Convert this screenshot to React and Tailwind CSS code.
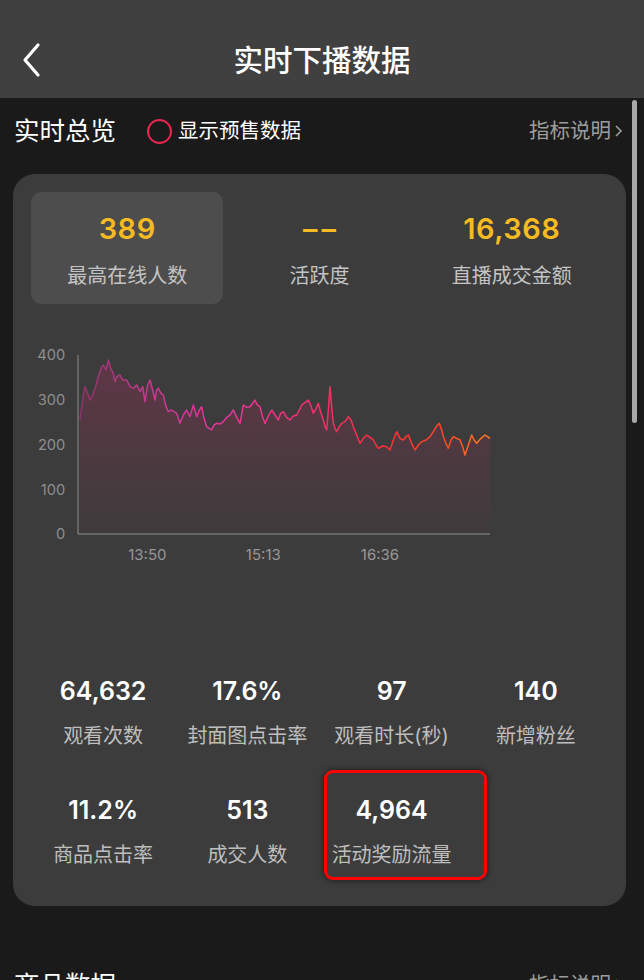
import React from "react";

const font = { fontFamily: 'Inter, "Noto Sans CJK SC", sans-serif' };

// chart points, in the 3x coordinate space of the chart svg
const points = [
  [180, 270], [188, 210], [195, 170], [203, 190], [210, 210], [220, 190], [228, 165],
  [235, 140], [243, 115], [250, 105], [258, 120], [265, 90], [272, 115], [280, 130],
  [285, 155], [290, 140], [300, 135], [308, 150], [320, 150], [330, 170], [340, 175],
  [350, 165], [360, 185], [368, 170], [375, 215], [383, 165], [390, 150], [398, 180],
  [405, 210], [410, 180], [415, 175], [423, 190], [430, 195], [438, 230], [445, 245],
  [455, 240], [470, 250], [480, 280], [490, 255], [500, 240], [510, 260], [520, 225],
  [530, 260], [538, 240], [545, 230], [552, 265], [560, 290], [568, 295], [575, 300],
  [582, 285], [590, 280], [600, 282], [610, 275], [620, 262], [630, 255], [640, 240],
  [650, 262], [660, 280], [670, 225], [680, 232], [690, 230], [698, 220], [705, 210],
  [712, 225], [720, 230], [728, 262], [735, 280], [745, 258], [755, 240], [765, 255],
  [775, 270], [782, 250], [790, 245], [800, 262], [810, 270], [820, 258], [830, 255],
  [838, 240], [845, 225], [855, 218], [865, 210], [872, 225], [880, 250], [888, 235],
  [895, 220], [903, 250], [910, 270], [915, 290], [920, 300], [925, 240], [930, 170],
  [935, 230], [940, 280], [945, 295], [950, 305], [958, 290], [965, 280], [975, 275],
  [985, 260], [993, 270], [1000, 290], [1010, 315], [1020, 340], [1030, 325],
  [1040, 315], [1050, 322], [1060, 330], [1068, 345], [1075, 355], [1088, 348],
  [1100, 350], [1110, 360], [1120, 330], [1130, 305], [1140, 325], [1150, 330],
  [1158, 320], [1165, 315], [1175, 340], [1185, 360], [1195, 345], [1205, 335],
  [1218, 330], [1230, 320], [1240, 305], [1250, 288], [1258, 280], [1265, 300],
  [1270, 320], [1278, 340], [1285, 355], [1293, 330], [1300, 320], [1310, 325],
  [1320, 330], [1328, 350], [1335, 375], [1345, 345], [1355, 315], [1362, 330],
  [1370, 340], [1383, 325], [1395, 315], [1410, 325],
];

const linePath = points.map(([x, y], i) => `${i ? "L" : "M"}${x} ${y}`).join(" ");
const areaPath = `${linePath} L1410 612 L180 612 Z`;

const Chart = () => (
  <svg width="470" height="240" viewBox="33 0 1410 720" className="block">
    <defs>
      <linearGradient id="line" x1="180" y1="0" x2="1410" y2="0" gradientUnits="userSpaceOnUse">
        <stop offset="0" stopColor="#8a3468" />
        <stop offset="0.15" stopColor="#c23a8e" />
        <stop offset="0.35" stopColor="#e6369c" />
        <stop offset="0.6" stopColor="#f52f66" />
        <stop offset="0.75" stopColor="#ff2f35" />
        <stop offset="0.9" stopColor="#ff4a22" />
        <stop offset="1" stopColor="#ff7d25" />
      </linearGradient>
      <linearGradient id="area" x1="0" y1="0" x2="0" y2="1">
        <stop offset="0" stopColor="#b8285e" stopOpacity="0.28" />
        <stop offset="1" stopColor="#b8285e" stopOpacity="0.02" />
      </linearGradient>
    </defs>
    <path d={areaPath} fill="url(#area)" />
    <path d={linePath} fill="none" stroke="url(#line)" strokeWidth="4.5" strokeLinejoin="round" />
    <path d="M174 75 V612 H1410" fill="none" stroke="#8d8d8d" strokeWidth="3" />
    <g fill="#8e8e8e" fontSize="44" textAnchor="end" style={font}>
      <text x="136" y="90">400</text>
      <text x="136" y="225">300</text>
      <text x="136" y="360">200</text>
      <text x="136" y="495">100</text>
      <text x="136" y="627">0</text>
    </g>
    <g fill="#979797" fontSize="45" textAnchor="middle" style={font}>
      <text x="382" y="690">13:50</text>
      <text x="730" y="690">15:13</text>
      <text x="1080" y="690">16:36</text>
    </g>
  </svg>
);

const TopStat = ({ value, label, active, spaced }) => (
  <div
    className={`flex flex-col items-center pt-[20px] h-[112px] rounded-[10px] ${
      active ? "bg-[#4d4d4d]" : ""
    }`}
  >
    <div
      className={`text-[29px] leading-[34px] font-semibold text-[#f7bb22] ${
        spaced ? "tracking-[4px] pl-[4px]" : "tracking-[0.5px]"
      }`}
    >
      {value}
    </div>
    <div className="mt-[18px] text-[20px] leading-[24px] text-[#c4c4c4]">{label}</div>
  </div>
);

const Stat = ({ value, label, marked }) => (
  <div className="relative flex flex-col items-center">
    {marked && (
      <div className="absolute -top-[25px] left-[4px] w-[163px] h-[110px] rounded-[9px] border-[3px] border-[#ff0000] shadow-[0_0_6px_rgba(0,0,0,0.6)]" />
    )}
    <div className="text-[25px] leading-[30px] font-semibold text-white">{value}</div>
    <div className="mt-[17px] text-[20px] leading-[26px] text-[#bebebe]">{label}</div>
  </div>
);

const SectionHead = ({ title, children }) => (
  <div className="flex items-center h-[32px] pl-[14px] pr-[19px]">
    <div className="text-[25.5px] text-white">{title}</div>
    {children}
    <div className="ml-auto flex items-center text-[20.5px] text-[#9c9c9c]">
      指标说明
      <svg width="12" height="16" viewBox="0 0 12 16" className="ml-[2px]">
        <path d="M3 3 L8 8 L3 13" fill="none" stroke="#9c9c9c" strokeWidth="1.6" />
      </svg>
    </div>
  </div>
);

export default function App() {
  return (
    <div className="w-[644px] h-[980px] overflow-hidden bg-[#1a1a1a] relative" style={font}>
      {/* header */}
      <div className="h-[98px] bg-[#404040] pt-[38px]">
        <div className="relative h-[44px] flex items-center justify-center">
          <svg width="24" height="36" viewBox="0 0 24 36" className="absolute left-[20px] top-[4px]">
            <path d="M18 3 L5 18 L18 33" fill="none" stroke="#ffffff" strokeWidth="3.2" strokeLinecap="round" strokeLinejoin="round" />
          </svg>
          <div className="text-[29.5px] text-white font-medium">实时下播数据</div>
        </div>
      </div>

      {/* scrollbar */}
      <div className="absolute left-[632px] top-[100px] w-[5px] h-[323px] rounded-full bg-[#a8a8a8]" />

      <div className="pt-[17px]">
        <SectionHead title="实时总览">
          <div className="ml-[31px] w-[25px] h-[25px] rounded-full border-2 border-[#e8264f]" />
          <div className="ml-[6px] text-[20.5px] text-white">显示预售数据</div>
        </SectionHead>

        <div className="mt-[27px] ml-[13px] w-[613px] rounded-[22px] bg-[#3c3c3c] px-[18px] pt-[18px] pb-[38px]">
          <div className="grid grid-cols-3">
            <TopStat value="389" label="最高在线人数" active />
            <TopStat value="––" label="活跃度" spaced />
            <TopStat value="16,368" label="直播成交金额" />
          </div>

          <div className="mt-[26px]">
            <Chart />
          </div>

          <div className="mt-[106px] grid grid-cols-4 gap-y-[46px]">
            <Stat value="64,632" label="观看次数" />
            <Stat value="17.6%" label="封面图点击率" />
            <Stat value="97" label="观看时长(秒)" />
            <Stat value="140" label="新增粉丝" />
            <Stat value="11.2%" label="商品点击率" />
            <Stat value="513" label="成交人数" />
            <Stat value="4,964" label="活动奖励流量" marked />
          </div>
        </div>

        <div className="mt-[63px]">
          <SectionHead title="商品数据" />
        </div>
      </div>
    </div>
  );
}
